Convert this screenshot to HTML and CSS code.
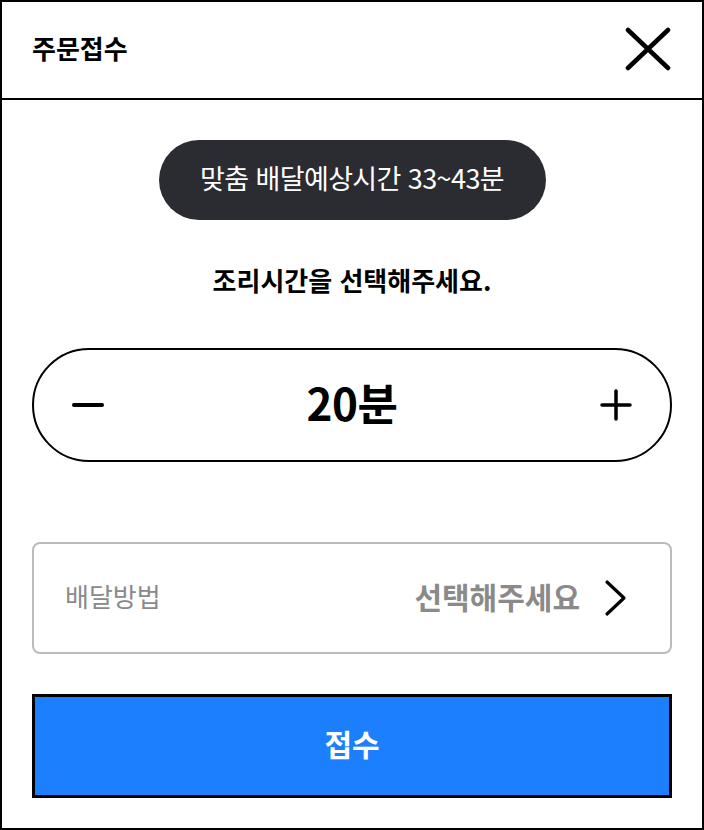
FILE: index.html
```html
<!DOCTYPE html>
<html lang="ko">
<head>
<meta charset="utf-8">
<title>주문접수</title>
<link rel="stylesheet" href="styles.css">
</head>
<body>
<div class="frame">
  <header class="header">
    <h1 class="title">주문접수</h1>
    <button class="close" aria-label="닫기">
      <svg width="46" height="44" viewBox="0 0 46 44"><path d="M3 3 L43 41 M43 3 L3 41" stroke="#000" stroke-width="4.5" stroke-linecap="round" fill="none"/></svg>
    </button>
  </header>
  <main class="main">
    <div class="pill">맞춤 배달예상시간 33~43분</div>
    <p class="prompt">조리시간을 선택해주세요.</p>
    <div class="stepper">
      <button class="step" aria-label="감소">
        <svg width="32" height="32" viewBox="0 0 32 32"><path d="M2 16 H30" stroke="#000" stroke-width="4" stroke-linecap="round"/></svg>
      </button>
      <span class="value">20분</span>
      <button class="step" aria-label="증가">
        <svg width="32" height="32" viewBox="0 0 32 32"><path d="M2 16 H30 M16 2 V30" stroke="#000" stroke-width="3.5" stroke-linecap="round"/></svg>
      </button>
    </div>
    <div class="select">
      <span class="select-label">배달방법</span>
      <span class="select-value">선택해주세요</span>
      <svg class="chev" width="24" height="38" viewBox="0 0 24 38"><path d="M3 3 L20 19 L3 35" stroke="#000" stroke-width="3.2" stroke-linecap="round" stroke-linejoin="round" fill="none"/></svg>
    </div>
    <button class="submit">접수</button>
  </main>
</div>
</body>
</html>
```
FILE: styles.css
```css
* { box-sizing: border-box; }
html, body { margin: 0; padding: 0; background: #fff; }
body { font-family: "Noto Sans CJK KR", "Noto Sans", sans-serif; color: #000; }
button { font-family: inherit; background: none; border: 0; padding: 0; margin: 0; cursor: pointer; }

.frame {
  width: 704px;
  height: 830px;
  border: 2px solid #000;
  display: flex;
  flex-direction: column;
}

.header {
  height: 98px;
  border-bottom: 2px solid #000;
  display: flex;
  align-items: center;
  justify-content: space-between;
  padding: 0 31px 2px 30px;
}
.title {
  margin: 0;
  font-size: 26px;
  font-weight: 700;
  letter-spacing: 0;
  line-height: 1;
  padding-bottom: 2px;
}
.close { display: flex; width: 46px; height: 44px; }

.main {
  display: flex;
  flex-direction: column;
  align-items: center;
  padding: 40px 30px 0;
}

.pill {
  height: 80px;
  width: 387px;
  border-radius: 40px;
  background: #2b2c31;
  color: #fff;
  font-size: 27px;
  letter-spacing: -0.6px;
  display: flex;
  align-items: center;
  justify-content: center;
  padding-bottom: 5px;
}

.prompt {
  margin: 43px 0 0;
  height: 34px;
  line-height: 34px;
  font-size: 26px;
  font-weight: 700;
  letter-spacing: 0;
}

.stepper {
  margin-top: 51px;
  width: 100%;
  height: 114px;
  border: 2px solid #000;
  border-radius: 57px;
  display: flex;
  align-items: center;
  justify-content: space-between;
  padding: 0 38px;
}
.step { display: flex; width: 32px; height: 32px; }
.value {
  font-size: 44px;
  font-weight: 700;
  letter-spacing: -0.5px;
  line-height: 1;
  padding-bottom: 7px;
}

.select {
  margin-top: 80px;
  width: 100%;
  height: 112px;
  border: 2px solid #bbb;
  border-radius: 8px;
  display: flex;
  align-items: center;
  padding: 0 42px 0 31px;
}
.select-label {
  font-size: 26px;
  color: #8a8a8a;
  letter-spacing: 0;
  flex: 1;
  padding-bottom: 5px;
}
.select-value {
  font-size: 30px;
  font-weight: 700;
  color: #8a8a8a;
  letter-spacing: 0;
  margin-right: 24px;
  padding-bottom: 5px;
}
.chev { display: block; }

.submit {
  margin-top: 40px;
  width: 100%;
  height: 104px;
  border: 3px solid #000;
  background: #1b7ffe;
  color: #fff;
  font-size: 30px;
  font-weight: 700;
  letter-spacing: 0;
  padding-bottom: 6px;
}
```
